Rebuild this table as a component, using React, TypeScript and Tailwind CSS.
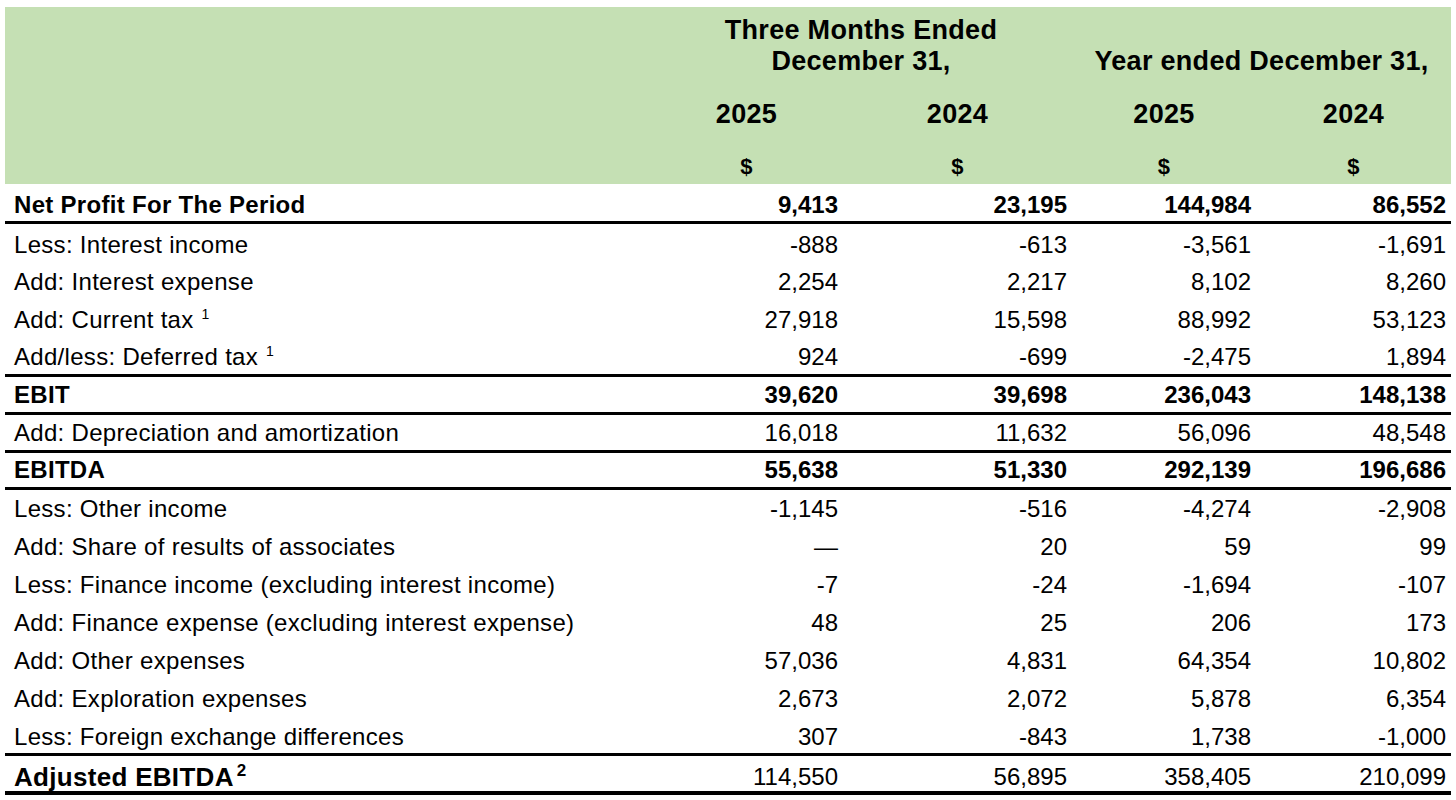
const cols = "grid grid-cols-[645px_193px_229px_184px_195px]";

type Row = {
  label: string;
  sup?: string;
  vals: string[];
  bold?: boolean;
  cls: string;
};

const rows: Row[] = [
  { label: "Net Profit For The Period", vals: ["9,413", "23,195", "144,984", "86,552"], bold: true, cls: "h-[40px] border-b-[3px] pt-[4px]" },
  { label: "Less: Interest income", vals: ["-888", "-613", "-3,561", "-1,691"], cls: "h-[37.5px] pt-[4px]" },
  { label: "Add: Interest expense", vals: ["2,254", "2,217", "8,102", "8,260"], cls: "h-[37.5px] pt-[3px]" },
  { label: "Add: Current tax", sup: "1", vals: ["27,918", "15,598", "88,992", "53,123"], cls: "h-[37.5px] pt-[4px]" },
  { label: "Add/less: Deferred tax", sup: "1", vals: ["924", "-699", "-2,475", "1,894"], cls: "h-[40.5px] border-b-[3px] pt-[3px]" },
  { label: "EBIT", vals: ["39,620", "39,698", "236,043", "148,138"], bold: true, cls: "h-[38px] border-b-[3px]" },
  { label: "Add: Depreciation and amortization", vals: ["16,018", "11,632", "56,096", "48,548"], cls: "h-[38px] border-b-[3px]" },
  { label: "EBITDA", vals: ["55,638", "51,330", "292,139", "196,686"], bold: true, cls: "h-[37px] border-b-[3px]" },
  { label: "Less: Other income", vals: ["-1,145", "-516", "-4,274", "-2,908"], cls: "h-[38px]" },
  { label: "Add: Share of results of associates", vals: ["\u2014", "20", "59", "99"], cls: "h-[38px]" },
  { label: "Less: Finance income (excluding interest income)", vals: ["-7", "-24", "-1,694", "-107"], cls: "h-[38px]" },
  { label: "Add: Finance expense (excluding interest expense)", vals: ["48", "25", "206", "173"], cls: "h-[38px]" },
  { label: "Add: Other expenses", vals: ["57,036", "4,831", "64,354", "10,802"], cls: "h-[38px]" },
  { label: "Add: Exploration expenses", vals: ["2,673", "2,072", "5,878", "6,354"], cls: "h-[38px]" },
  { label: "Less: Foreign exchange differences", vals: ["307", "-843", "1,738", "-1,000"], cls: "h-[38px] border-b-[3px] pt-[3px]" },
];

export default function App() {
  return (
    <div className="min-h-screen bg-white pt-[7px] pl-[5px] text-black font-['Liberation_Sans',Arial,sans-serif]">
      <div className="w-[1446px]">
        {/* green header */}
        <div className={`${cols} bg-[#c5e0b4] h-[177px] pt-[8px] content-start font-bold tracking-[0.3px]`}>
          <div />
          <div className="col-span-2 text-center text-[27px] leading-[31px]">
            Three Months Ended
            <br />
            December 31,
          </div>
          <div className="col-span-2 flex items-end justify-center text-[27px] leading-[31px]">
            Year ended December 31,
          </div>
          <div />
          {["2025", "2024", "2025", "2024"].map((y, i) => (
            <div key={i} className="mt-[22px] text-center text-[27px] leading-[31px]">
              {y}
            </div>
          ))}
          <div />
          {[0, 1, 2, 3].map((i) => (
            <div key={i} className="mt-[24px] text-center text-[22px] leading-[26px]">
              $
            </div>
          ))}
        </div>

        {/* body rows */}
        {rows.map((r) => (
          <div
            key={r.label}
            className={`${cols} items-center border-black text-[24px] leading-[28px] ${r.cls} ${r.bold ? "font-bold" : ""}`}
          >
            <div className="pl-[9px] whitespace-nowrap tracking-[0.3px]">
              {r.label}
              {r.sup && (
                <sup className="ml-[8px] text-[14px] relative -top-[9px]">{r.sup}</sup>
              )}
            </div>
            {r.vals.map((v, i) => (
              <div key={i} className="pr-[5px] text-right">
                {v}
              </div>
            ))}
          </div>
        ))}

        {/* adjusted total */}
        <div className={`${cols} items-center h-[39px] border-b-[4px] border-black pt-[6px] text-[24px] leading-[28px]`}>
          <div className="pl-[9px] whitespace-nowrap font-bold text-[26px] tracking-[0.3px]">
            Adjusted EBITDA
            <sup className="ml-[3px] text-[17px] relative -top-[10px]">2</sup>
          </div>
          {["114,550", "56,895", "358,405", "210,099"].map((v, i) => (
            <div key={i} className="pr-[5px] text-right">
              {v}
            </div>
          ))}
        </div>
      </div>
    </div>
  );
}
